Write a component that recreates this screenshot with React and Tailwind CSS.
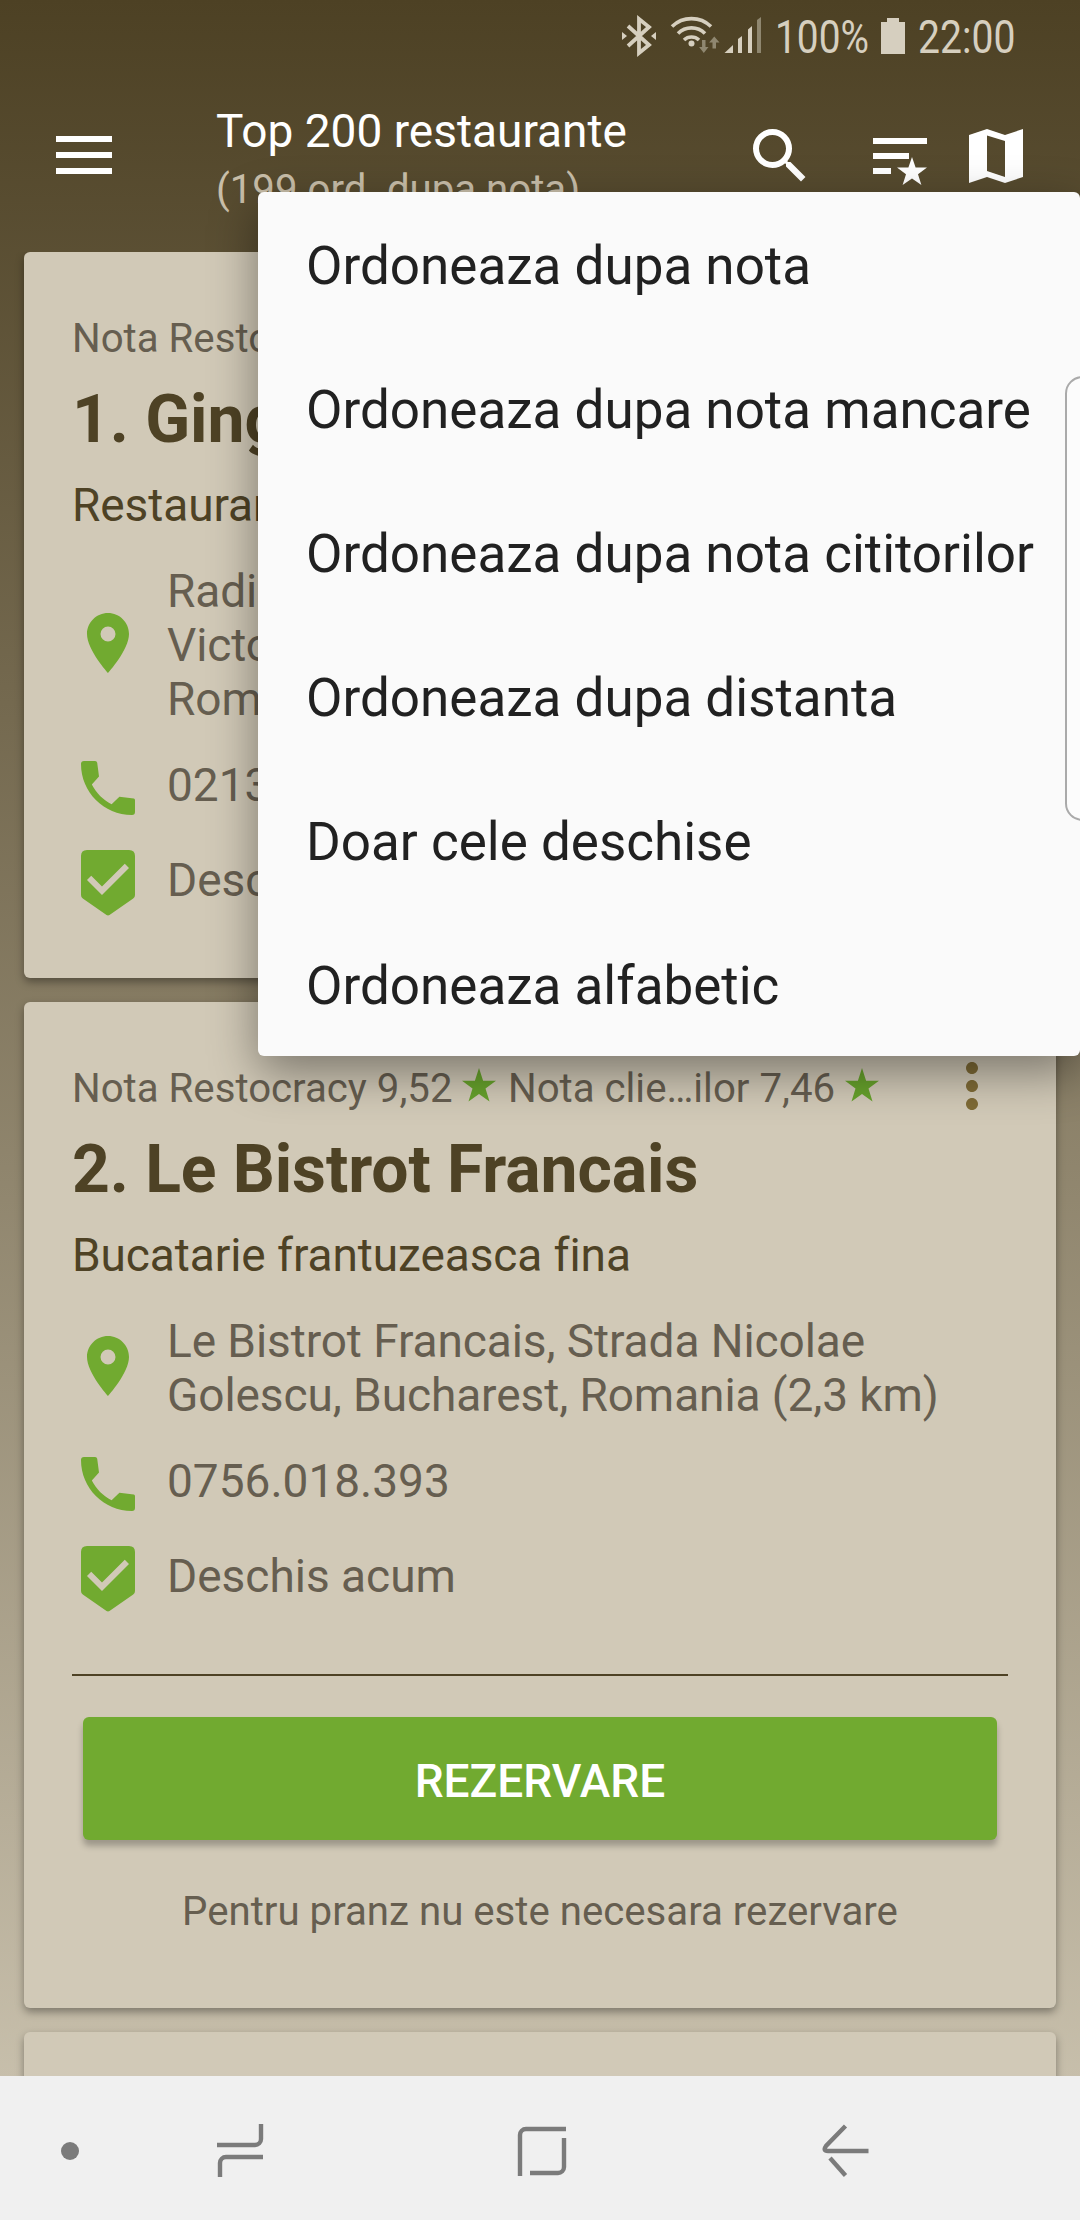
import React from 'react';
import { MdMoreVert, MdPlace, MdSearch } from 'react-icons/md';

const menuItems = [
  'Ordoneaza dupa nota',
  'Ordoneaza dupa nota mancare',
  'Ordoneaza dupa nota cititorilor',
  'Ordoneaza dupa distanta',
  'Doar cele deschise',
  'Ordoneaza alfabetic',
];

const restaurants = [
  {
    id: 1,
    name: '1. Ging',
    cuisine: 'Restauran',
    rating: '',
    clients: '',
    address: ['Radi', 'Victo', 'Rom'],
    phone: '0213',
  },
  {
    id: 2,
    name: '2. Le Bistrot Francais',
    cuisine: 'Bucatarie frantuzeasca fina',
    rating: '9,52',
    clients: '7,46',
    address: ['Le Bistrot Francais, Strada Nicolae', 'Golescu, Bucharest, Romania (2,3 km)'],
    phone: '0756.018.393',
    note: 'Pentru pranz nu este necesara rezervare',
  },
];

const StatusBar = () => (
  <div className="flex h-[72px] text-[#d6cfbf]">
    <svg className="ml-[620px] h-[72px] w-[150px] shrink-0" viewBox="620 0 150 72" fill="none">
      {/* Bluetooth */}
      <path d="M628 26L649 45L639 53V19L649 27L628 46" stroke="currentColor" strokeWidth="3.8" />
      <path d="M622 32l5 4-5 4zM656 32l-5 4 5 4z" fill="currentColor" />
      {/* Wifi */}
      <g stroke="currentColor" strokeWidth="3.6">
        <path d="M672 26.500a28 28 0 0 1 39 0" />
        <path d="M678 33.500a19 19 0 0 1 27 0" />
        <path d="M684 40a11 11 0 0 1 15 0" />
      </g>
      <circle cx="691.500" cy="43.500" r="3" fill="currentColor" />
      <g fill="#8f8770">
        <path d="M702 40h3.500v7h3l-4.700 6-4.700-6h3z" />
        <path d="M712.500 48.500h3.500v-6h3.500l-5.200-6-5.200 6h3.400z" />
      </g>
      {/* Signal */}
      <g fill="currentColor">
        <path d="M724.500 53l8.500-8v8z" />
        <path d="M738 39l4-3v17h-4z" />
        <path d="M748 29.500l4-3.500v27h-4z" />
      </g>
      <path d="M757 20l4-3v36h-4z" fill="#8f8770" />
    </svg>
    <span className="ml-[5px] w-[106px] origin-left scale-x-[0.845] text-[46px] leading-[74px]">100%</span>
    <svg className="h-[72px] w-[24px] shrink-0" viewBox="0 0 24 72" fill="currentColor">
      <path d="M6 18h12v4h6v32H0V22h6z" />
    </svg>
    <span className="ml-[13px] w-[110px] origin-left scale-x-[0.85] text-[46px] leading-[74px]">22:00</span>
  </div>
);

const Header = () => (
  <header className="flex h-[180px] text-white">
    <svg className="mt-[48px] ml-[48px] h-[72px] w-[72px] shrink-0" viewBox="0 0 72 72" fill="currentColor">
      <path d="M8 16h56v6H8zM8 32h56v6H8zM8 48h56v6H8z" />
    </svg>
    <div className="mt-[32px] ml-[96px] w-[528px]">
      <h1 className="text-[46px] leading-[54px] whitespace-nowrap">Top 200 restaurante</h1>
      <p className="mt-[8px] text-[40.2px] leading-[48px] whitespace-nowrap text-[#c9bfaa]">(199 ord. dupa nota)</p>
    </div>
    <MdSearch className="mt-[48px] h-[72px] w-[72px] shrink-0" />
    <svg className="mt-[48px] ml-[48px] h-[72px] w-[72px] shrink-0" viewBox="0 0 72 72" fill="currentColor">
      <path d="M9 18h54v6H9zM9 33h36v6H9zM9 48h18v6H9z" />
      <path d="M48 37l3.600 10.600H63l-9 6.700 3.400 10.700L48 58.400 38.600 65l3.400-10.700-9-6.700h11.400z" />
    </svg>
    <svg className="mt-[48px] ml-[24px] h-[72px] w-[72px] shrink-0" viewBox="0 0 72 72" fill="currentColor">
      <path fillRule="evenodd" d="M9 15l18-6 18 6 18-6v48l-18 6-18-6-18 6zM27 15.500v35.500l18 6V21z" />
    </svg>
  </header>
);

const Star = () => (
  <svg className="mb-[6px] h-[36px] w-[36px] shrink-0 text-[#67a22c]" viewBox="0 0 36 36" fill="currentColor">
    <path d="M18 1l4.100 12.800H35l-10.500 7.700 4 13L18 27l-10.500 7.500 4-13L1 13.800h12.900z" />
  </svg>
);

const PhoneIcon = ({ className }) => (
  <svg className={className} viewBox="0 0 24 24" fill="currentColor">
    <path d="M20.600 15.500l-4.800-.6-2.600 2.500c-2.830-1.440-5.150-3.750-6.590-6.590L9 8.200 8.400 3.600Q8.300 3 7.700 3H4Q3 3 3 4C3 13.400 10.600 21 20 21q1 0 1-1v-3.900q0-.5-.4-.6z" />
  </svg>
);

const OpenIcon = ({ className }) => (
  <svg className={className} viewBox="0 0 24 24" fill="currentColor">
    <path
      fillRule="evenodd"
      d="M5 1h14q2 0 2 2v13q0 .8-.6 1.200L12.500 22.700q-.5.3-1 0L3.600 17.200Q3 16.800 3 16V3q0-2 2-2zM10 16l9-9-1.410-1.410L10 13.170 6.410 9.590 5 11z"
    />
  </svg>
);

const InfoRow = ({ icon: Icon, children }) => (
  <div className="flex h-[72px] items-center">
    <Icon className="h-[72px] w-[72px] shrink-0 text-[#71aa30]" />
    <span className="mb-[6px] ml-[23px] text-[46px] leading-[54px]">{children}</span>
  </div>
);

const RestaurantCard = ({ item }) => (
  <article className="shrink-0 rounded-[6px] bg-[#d1c9b7] px-[48px] pt-[62px] pb-[59px] whitespace-nowrap text-[#665e50] shadow-[0_4px_9px_rgba(0,0,0,0.36)]">
    <div className="flex h-[48px] items-center text-[40.2px] leading-[48px]">
      <span className="w-[389px] pt-px">Nota Restocracy {item.rating}</span>
      <Star />
      <span className="ml-[11px] w-[336px] pt-px">Nota clie…ilor {item.clients}</span>
      <Star />
      <MdMoreVert className="mb-[4px] ml-[56px] h-[72px] w-[72px] shrink-0 text-[#7f6b36]" />
    </div>
    <h2 className="mt-[20px] text-[66px] leading-[76px] font-bold tracking-[-0.08px] text-[#4e4225]">{item.name}</h2>
    <p className="mt-[20px] text-[46px] leading-[54px] tracking-[-0.08px] text-[#4e4225]">{item.cuisine}</p>

    <div className="mt-[32px] flex items-center">
      <MdPlace className="mb-[4px] h-[72px] w-[72px] shrink-0 text-[#71aa30]" />
      <div className="ml-[23px] text-[46px] leading-[54px] tracking-[-0.08px]">
        {item.address.map((line) => (
          <div key={line}>{line}</div>
        ))}
      </div>
    </div>
    <div className="mt-[26px] flex flex-col gap-[23px]">
      <InfoRow icon={PhoneIcon}>{item.phone}</InfoRow>
      <InfoRow icon={OpenIcon}>Deschis acum</InfoRow>
    </div>

    {item.note && (
      <div className="mt-[59px] mb-[14px] border-t-2 border-[#4e4225] px-[11px] pt-[41px] text-center">
        <button className="block h-[123px] w-full rounded-[6px] bg-[#71aa30] text-[46px] leading-[128px] font-medium text-white shadow-[0_6px_6px_rgba(0,0,0,0.25)]">
          REZERVARE
        </button>
        <p className="mt-[48px] -mb-px text-[40.2px] leading-[48px]">{item.note}</p>
      </div>
    )}
  </article>
);

const SortMenu = () => (
  <ul className="absolute top-[192px] right-0 w-[822px] rounded-[6px] bg-[#fafafa] text-[#212121] shadow-[0_16px_48px_rgba(0,0,0,0.42)]">
    {menuItems.map((label) => (
      <li key={label} className="h-[144px] pl-[48px] text-[53px] leading-[149px] whitespace-nowrap">
        {label}
      </li>
    ))}
  </ul>
);

const NavBar = () => (
  <nav className="h-[144px]">
    <svg className="h-[144px] w-[1080px] bg-[#f0f0f0]" viewBox="0 2076 1080 144" fill="none" stroke="#7b7b7b" strokeWidth="4.400">
      <circle cx="70" cy="2151" r="9" fill="#7b7b7b" stroke="none" />
      <path d="M261 2124V2139a6 6 0 0 1-6 6H217" />
      <path d="M263 2157H226a6 6 0 0 0-6 6V2177" />
      <path d="M520 2176V2135a6 6 0 0 1 6-6H566" />
      <path d="M564 2138V2167a6 6 0 0 1-6 6H530" />
      <path d="M845.500 2126L826 2146q-3.500 5 2 5H868.500" />
      <path d="M830 2158L845.500 2175.500" />
    </svg>
  </nav>
);

export default function App() {
  return (
    <div className="relative flex h-[2220px] w-[1080px] flex-col overflow-hidden bg-linear-to-b from-[#4d4124] to-[#d0c8b5] font-['Roboto',sans-serif]">
      <StatusBar />
      <Header />
      <main className="flex h-[1824px] flex-col gap-[24px] overflow-hidden px-[24px]">
        {restaurants.map((item) => (
          <RestaurantCard key={item.id} item={item} />
        ))}
        <article className="h-[200px] shrink-0 rounded-[6px] bg-[#d1c9b7] shadow-[0_4px_9px_rgba(0,0,0,0.36)]" />
      </main>
      <NavBar />

      <SortMenu />
      {/* Edge panel handle */}
      <div className="absolute top-[376px] -right-[20px] h-[445px] w-[35px] rounded-[20px] border-2 border-[#aaaaaa] bg-[#fcfcfc]" />
    </div>
  );
}
